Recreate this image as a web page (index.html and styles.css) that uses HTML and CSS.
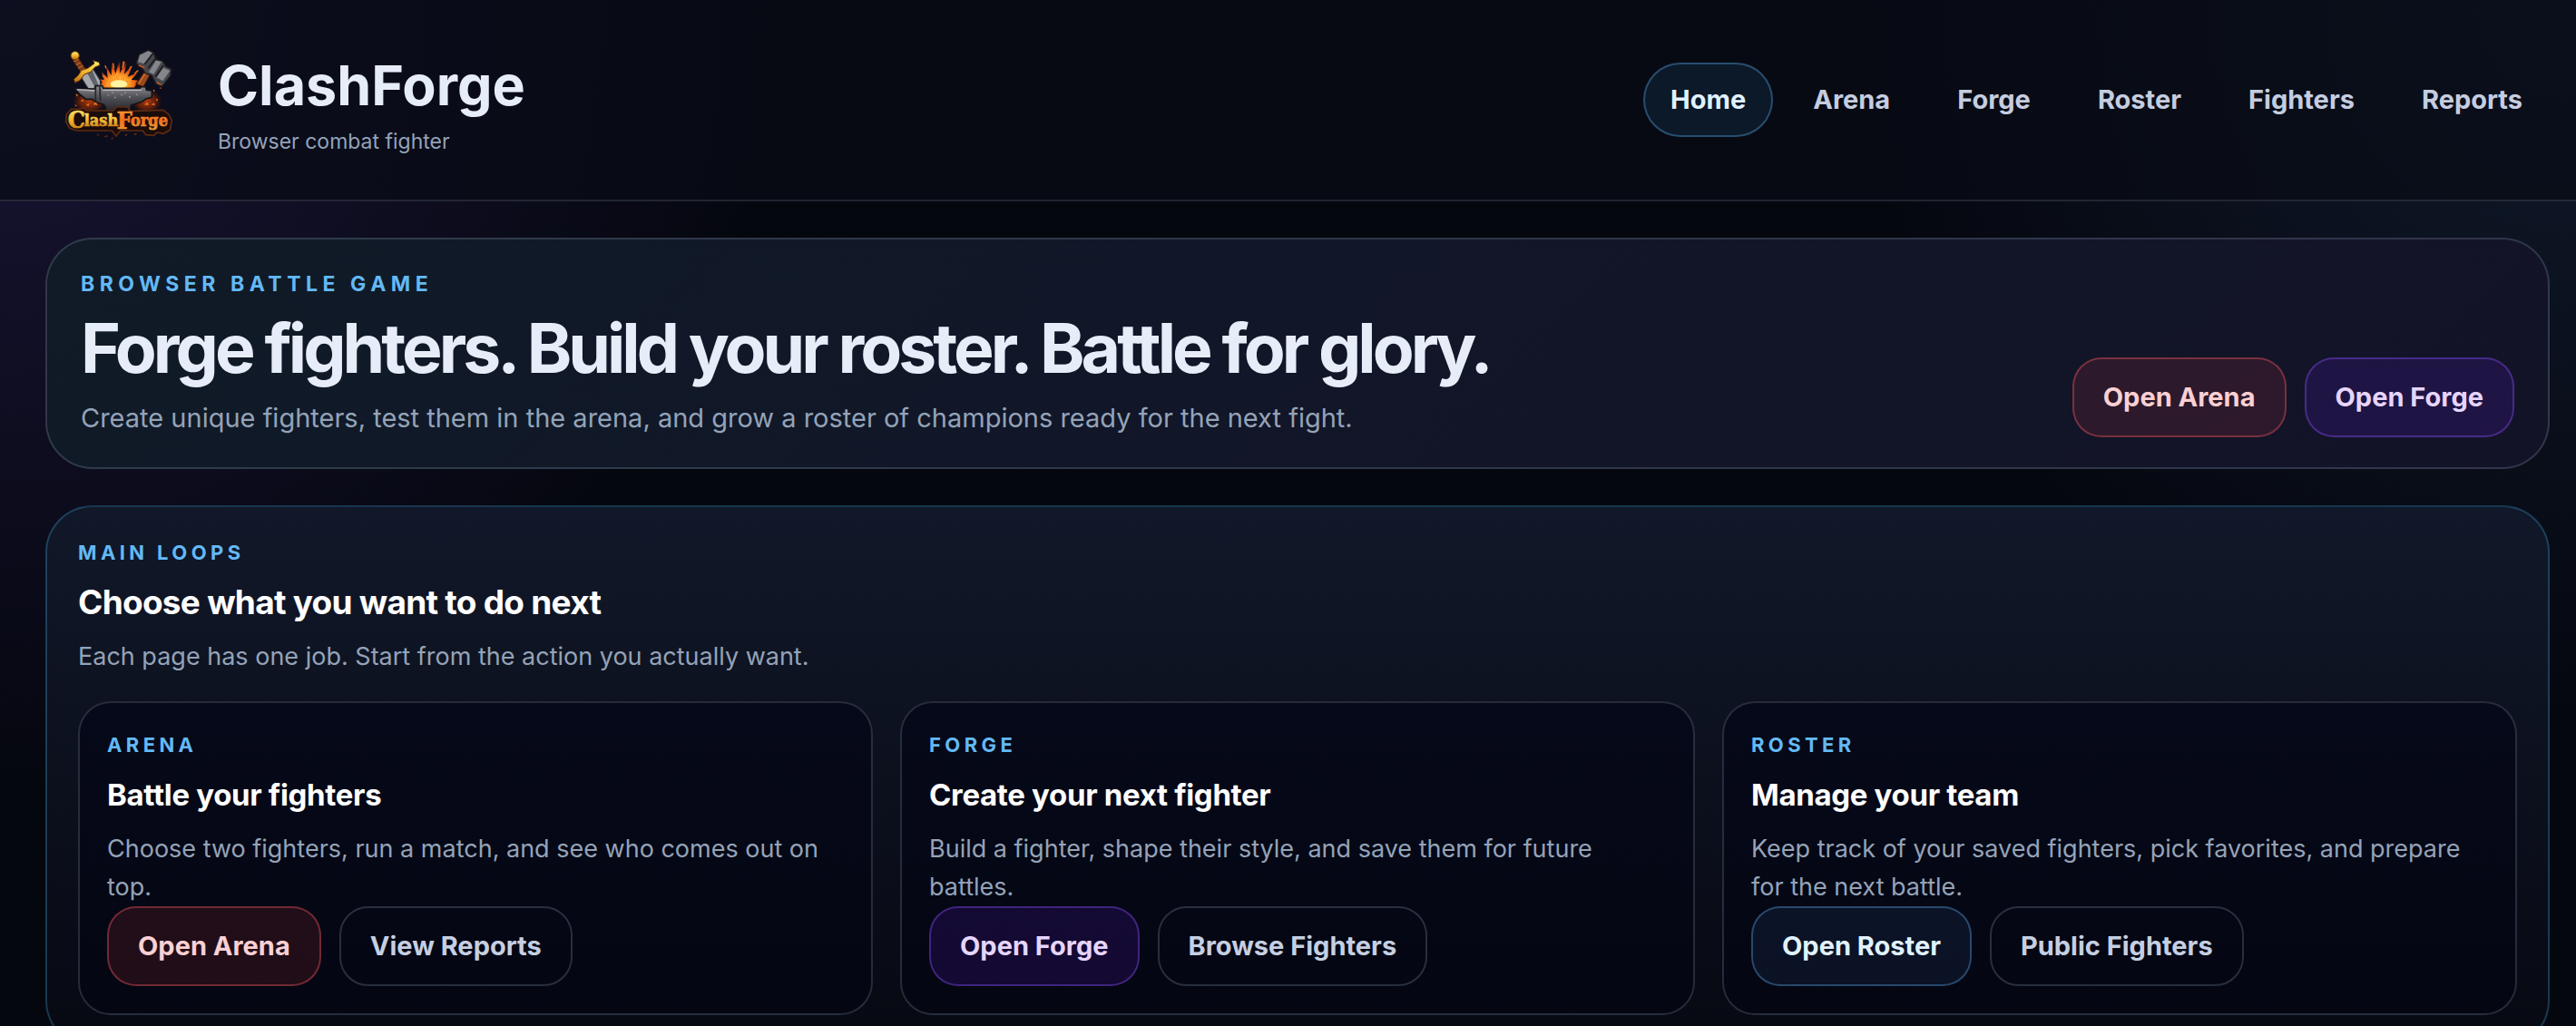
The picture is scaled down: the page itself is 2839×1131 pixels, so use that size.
FILE: index.html
```html
<!DOCTYPE html>
<html lang="en">
<head>
    <meta charset="UTF-8">
    <meta name="viewport" content="width=device-width, initial-scale=1.0">
    <title>ClashForge</title>
    <link rel="stylesheet" href="styles.css">
</head>
<body>
    <header class="site-header">
        <a href="#" class="brand">
            <svg class="brand-logo" viewBox="0 -30 480 480" aria-hidden="true">
                <defs>
                    <radialGradient id="fire" cx="50%" cy="85%" r="75%">
                        <stop offset="0" stop-color="#fff3a8"/>
                        <stop offset="0.25" stop-color="#ffb52e"/>
                        <stop offset="0.6" stop-color="#e5520f"/>
                        <stop offset="1" stop-color="#8a2408" stop-opacity="0"/>
                    </radialGradient>
                    <radialGradient id="glow">
                        <stop offset="0" stop-color="#b03a0a"/>
                        <stop offset="0.6" stop-color="#6e2208" stop-opacity="0.8"/>
                        <stop offset="1" stop-color="#3a1206" stop-opacity="0"/>
                    </radialGradient>
                    <linearGradient id="steel" x1="0" y1="0" x2="0" y2="1">
                        <stop offset="0" stop-color="#8b8b90"/>
                        <stop offset="0.4" stop-color="#505157"/>
                        <stop offset="1" stop-color="#1c1b20"/>
                    </linearGradient>
                    <linearGradient id="gold" x1="0" y1="0" x2="0" y2="1">
                        <stop offset="0" stop-color="#fff07a"/>
                        <stop offset="0.5" stop-color="#f2b632"/>
                        <stop offset="1" stop-color="#b9660f"/>
                    </linearGradient>
                    <linearGradient id="ember" x1="0" y1="0" x2="0" y2="1">
                        <stop offset="0" stop-color="#ffa63a"/>
                        <stop offset="0.5" stop-color="#f0701f"/>
                        <stop offset="1" stop-color="#e8a53a"/>
                    </linearGradient>
                </defs>
                <!-- glow and sparks -->
                <ellipse cx="146" cy="215" rx="58" ry="42" fill="url(#glow)"/>
                <ellipse cx="335" cy="215" rx="52" ry="42" fill="url(#glow)"/>
                <path d="M178 172l10-22-14-8 20 2-8-26 20 20-4-38 16 30 2-50 12 44 16-58-2 56 26-46-12 50 30-32-18 40 34-14-22 24 26 2-18 26z" fill="url(#fire)"/>
                <path d="M196 166l14-20 8-16 8 14 12-30 8 30 16-20 0 24 24-10-10 22z" fill="#ff9a2a"/>
                <ellipse cx="243" cy="158" rx="28" ry="13" fill="#fff2a0"/>
                <g fill="#e8701c">
                    <path d="M257 82l6 3-6 22-4-2zM222 90l4-2 3 18-4 0zM196 96l4 0 3 12-5-3zM282 98l5 2-10 14-3-2zM304 112l5 2-14 12-2-3zM186 128l10 6-4 3zM100 190l8 4-4 6zM116 214l8-6 2 8zM134 226l12-4-4 10zM356 176l6 2-3 7zM366 206l7 3-5 6zM350 226l10-6 2 9zM98 226l6 3-4 4zM380 168l4 4-5 2zM326 226l12-8 4 10zM158 226l10-12 4 14z"/>
                </g>
                <!-- sword -->
                <g>
                    <path d="M112 126l42 68 30-2-2-46-24-38z" fill="#a6a9ae" stroke="#2a2a30" stroke-width="4"/>
                    <path d="M136 118l34 62 12-4-28-66z" fill="#5f6369"/>
                    <path d="M88 76l18-10 30 46-16 12z" fill="#7c3a16" stroke="#321407" stroke-width="3"/>
                    <path d="M94 84l16-8M101 95l16-9M108 106l16-9M115 116l15-9" stroke="#c4723a" stroke-width="3"/>
                    <circle cx="98" cy="64" r="14" fill="url(#gold)" stroke="#5b3208" stroke-width="3"/>
                    <path d="M94 142l4 12 16-8 16-20 20-8 14-16 16-6-2-10-20-6 4 10-22 16-20 6-12 18z" fill="url(#gold)" stroke="#5b3208" stroke-width="3"/>
                </g>
                <!-- hammer -->
                <path d="M300 158l34-52 18 12-28 50z" fill="#9a4a1c" stroke="#35150a" stroke-width="4"/>
                <path d="M308 156l24-36" stroke="#d47a35" stroke-width="4"/>
                <path d="M300 90l10-30 30-14 18 8 8 22 22 6 10 18 18 8-2 22-28 36-20-8-14-28-22-8-10-18z" fill="#46474d" stroke="#1b1a1f" stroke-width="4"/>
                <path d="M312 62l28-13 14 6-26 36-22-6zM390 104l22 10-24 34-20-12zM366 80l18 4-26 42-16-8z" fill="#85868c"/>
                <path d="M328 92l28-36M340 106l28-38M364 134l26-38" stroke="#1b1a1f" stroke-width="5"/>
                <path d="M308 96l20 8M368 152l14 8" stroke="#c4531b" stroke-width="5"/>
                <!-- anvil -->
                <path d="M96 172l66 2 4-10 22 0 4 8 120 0 6-6 14 2 2 10 18 2 0 22-18 4-14 10-36 12-6 20 30 10-126 0 18-20-6-12-24-8-16-10-20 0-20-16z" fill="url(#steel)" stroke="#151419" stroke-width="5"/>
                <path d="M104 176l60 4M190 178l128 0" stroke="#b9b9be" stroke-width="4"/>
                <path d="M166 168l0 46M180 168l2 46" stroke="#27262b" stroke-width="5"/>
                <path d="M206 194l4 3M228 204l5-3M250 192l5 4M276 202l6-3M300 192l5 3M220 186l5 1M262 186l5 1" stroke="#94949a" stroke-width="4"/>
                <!-- wordmark plate -->
                <path d="M70 258l16-18 30 2 6-6 14 10 88 0 12-12 36 0 8 14 110-4 18 14 10 20-6 32-22 12-20-4-12 10-26-2-10-14-74 0-14 18-14-18-66 0-50 0-24-8-12-22z" fill="#1a0c0b" stroke="#5e2a10" stroke-width="5"/>
                <path d="M170 322l10 4-6 4zM192 332l12-6 2 8zM216 338l10-4-4 8zM262 324l10 0-6 8zM290 322l14-2-6 8z" fill="#5c2811"/>
                <g class="wordmark">
                    <text x="74" y="304" font-size="80" fill="url(#gold)" stroke="url(#gold)">C</text>
                    <text x="128" y="298" font-size="54" fill="url(#gold)" stroke="url(#gold)">lash</text>
                    <text x="236" y="306" font-size="80" fill="url(#ember)" stroke="url(#ember)">F</text>
                    <text x="282" y="298" font-size="54" fill="url(#ember)" stroke="url(#ember)">orge</text>
                </g>
            </svg>
            <span class="brand-text">
                <span class="brand-name">ClashForge</span>
                <span class="brand-tagline">Browser combat fighter</span>
            </span>
        </a>
        <nav class="site-nav">
            <a href="#" class="active">Home</a>
            <a href="#">Arena</a>
            <a href="#">Forge</a>
            <a href="#">Roster</a>
            <a href="#">Fighters</a>
            <a href="#">Reports</a>
        </nav>
    </header>

    <main class="page">
        <section class="hero">
            <div class="hero-copy">
                <p class="eyebrow hero-eyebrow">Browser Battle Game</p>
                <h1>Forge fighters. Build your roster. Battle for glory.</h1>
                <p class="hero-text">Create unique fighters, test them in the arena, and grow a roster of champions ready for the next fight.</p>
            </div>
            <div class="actions">
                <a href="#" class="btn btn-arena">Open Arena</a>
                <a href="#" class="btn btn-forge">Open Forge</a>
            </div>
        </section>

        <section class="panel">
            <div class="panel-head">
                <p class="eyebrow">Main Loops</p>
                <h2>Choose what you want to do next</h2>
                <p class="muted">Each page has one job. Start from the action you actually want.</p>
            </div>
            <div class="card-grid">
                <article class="card">
                    <p class="eyebrow">Arena</p>
                    <h3>Battle your fighters</h3>
                    <p class="muted">Choose two fighters, run a match, and see who comes out on top.</p>
                    <div class="actions">
                        <a href="#" class="btn btn-arena">Open Arena</a>
                        <a href="#" class="btn">View Reports</a>
                    </div>
                </article>
                <article class="card">
                    <p class="eyebrow">Forge</p>
                    <h3>Create your next fighter</h3>
                    <p class="muted">Build a fighter, shape their style, and save them for future battles.</p>
                    <div class="actions">
                        <a href="#" class="btn btn-forge">Open Forge</a>
                        <a href="#" class="btn">Browse Fighters</a>
                    </div>
                </article>
                <article class="card">
                    <p class="eyebrow">Roster</p>
                    <h3>Manage your team</h3>
                    <p class="muted">Keep track of your saved fighters, pick favorites, and prepare for the next battle.</p>
                    <div class="actions">
                        <a href="#" class="btn btn-roster">Open Roster</a>
                        <a href="#" class="btn">Public Fighters</a>
                    </div>
                </article>
            </div>
        </section>
    </main>
</body>
</html>
```
FILE: styles.css
```css
* {
    box-sizing: border-box;
}

body {
    margin: 0;
    min-height: 100vh;
    background:
        radial-gradient(circle at top left, rgba(124, 92, 246, 0.17), transparent 28%),
        radial-gradient(circle at top right, rgba(96, 165, 250, 0.12), transparent 26%),
        #05070f;
    color: #e7edf8;
    font-family: Inter, "Liberation Sans", sans-serif;
    font-size: 29px;
    line-height: 42px;
}

h1, h2, h3, p {
    margin: 0;
}

a {
    color: inherit;
    text-decoration: none;
}

/* Header */
.site-header {
    display: flex;
    align-items: center;
    justify-content: space-between;
    padding: 30px 29px 30px 50px;
    background: rgba(9, 12, 21, 0.7);
    border-bottom: 2px solid rgba(148, 163, 184, 0.18);
}

.brand {
    display: flex;
    align-items: center;
    gap: 30px;
}

.brand-logo {
    width: 160px;
    height: 160px;
}

.wordmark {
    font-family: "DejaVu Serif Condensed", "DejaVu Serif", serif;
    font-weight: 700;
    stroke-width: 2;
}

.brand-text {
    display: flex;
    flex-direction: column;
}

.brand-name {
    font-size: 61px;
    font-weight: 700;
    line-height: 92px;
}

.brand-tagline {
    color: #94a3b8;
    font-size: 23px;
    line-height: 33px;
}

.site-nav {
    display: flex;
    gap: 14px;
}

.site-nav a {
    padding: 18px 28px;
    border: 2px solid transparent;
    border-radius: 999px;
    color: #c5cde0;
    font-weight: 700;
}

.site-nav a.active {
    background: rgba(56, 165, 230, 0.1);
    border-color: rgba(96, 180, 250, 0.34);
    color: #e0f2fe;
}

/* Content */
.page {
    display: flex;
    flex-direction: column;
    gap: 40px;
    padding: 40px 29px 40px 50px;
}

.eyebrow {
    margin-bottom: 14px;
    color: #63b9f6;
    font-size: 22px;
    font-weight: 700;
    line-height: 33px;
    letter-spacing: 0.2em;
    text-transform: uppercase;
}

.muted,
.hero-text {
    color: #94a3b8;
}

.muted {
    font-size: 27px;
}

.hero {
    display: flex;
    align-items: flex-end;
    justify-content: space-between;
    gap: 40px;
    padding: 33px 37px;
    border: 2px solid rgba(148, 163, 184, 0.24);
    border-radius: 52px;
    background: linear-gradient(135deg, #101b27, #111628 50%, #131328);
}

.hero-eyebrow {
    margin-bottom: 16px;
    font-size: 23px;
    letter-spacing: 0.24em;
}

h1 {
    margin-bottom: 18px;
    font-size: 75px;
    font-weight: 700;
    line-height: 76px;
    letter-spacing: -4px;
}

.panel {
    padding: 34px;
    border: 2px solid rgba(56, 139, 189, 0.36);
    border-radius: 52px;
    background: linear-gradient(180deg, #111829, #070912);
}

.panel-head {
    margin-bottom: 28px;
}

h2,
h3 {
    margin-bottom: 15px;
    color: #fff;
    font-weight: 700;
    line-height: 48px;
}

h2 {
    font-size: 37px;
    letter-spacing: -0.02em;
}

h3 {
    font-size: 33px;
    letter-spacing: -0.01em;
}

.card-grid {
    display: grid;
    grid-template-columns: repeat(3, 1fr);
    gap: 30px;
}

.card {
    padding: 30px;
    border: 2px solid rgba(148, 163, 184, 0.24);
    border-radius: 36px;
    background: linear-gradient(180deg, #060919, #040612);
}

/* Buttons */
.actions {
    display: flex;
    flex-wrap: wrap;
    gap: 20px;
}

.btn {
    padding: 21px 32px;
    border: 2px solid rgba(148, 163, 184, 0.26);
    border-radius: 32px;
    color: #c5cfe2;
    font-weight: 700;
    white-space: nowrap;
}

.btn-arena {
    background: rgba(239, 68, 68, 0.12);
    border-color: rgba(248, 90, 100, 0.38);
    color: #fbd0d3;
}

.btn-forge {
    background: rgba(88, 28, 200, 0.18);
    border-color: rgba(139, 80, 246, 0.38);
    color: #e6d5fd;
}

.btn-roster {
    background: rgba(96, 165, 250, 0.08);
    border-color: rgba(96, 180, 250, 0.34);
    color: #e0f2fe;
}
```
